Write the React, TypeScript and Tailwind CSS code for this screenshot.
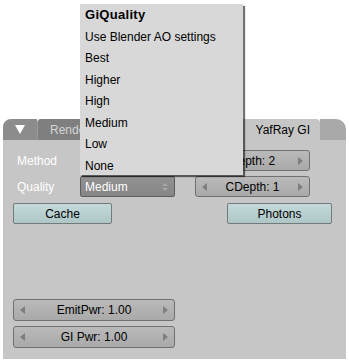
import React from "react";

const font = { fontFamily: '"Liberation Sans", Arial, sans-serif' };

function Arrow({ dir }: { dir: "l" | "r" }) {
  return (
    <svg width="5" height="8" viewBox="0 0 5 8" className="shrink-0">
      {dir === "l" ? <path d="M5 0 L0 4 L5 8 Z" fill="#7e7e7e" /> : <path d="M0 0 L5 4 L0 8 Z" fill="#7e7e7e" />}
    </svg>
  );
}

function Num({ label, className }: { label: string; className: string }) {
  return (
    <div
      className={`flex items-center justify-between px-[6px] rounded-[3px] border border-[#707070] bg-gradient-to-b from-[#bababa] to-[#a9a9a9] text-[12px] text-black ${className}`}
    >
      <Arrow dir="l" />
      <span className="leading-none">{label}</span>
      <Arrow dir="r" />
    </div>
  );
}

function Btn({ label, className }: { label: string; className: string }) {
  return (
    <div
      className={`flex items-center justify-center rounded-[2px] border border-[#727a7a] bg-gradient-to-b from-[#c4dada] to-[#aec6c6] text-[12px] text-black ${className}`}
    >
      <span className="leading-none">{label}</span>
    </div>
  );
}

function Drop({ label, className }: { label: string; className: string }) {
  return (
    <div
      className={`flex items-center justify-between pl-[4px] pr-[6px] rounded-[2px] border border-[#5e5e5e] bg-gradient-to-b from-[#929292] to-[#868686] text-[12px] text-white ${className}`}
    >
      <span className="leading-none">{label}</span>
      <svg width="6" height="10" viewBox="0 0 6 10">
        <path d="M0 4 L3 1 L6 4 Z M0 6 L3 9 L6 6 Z" fill="#a8a8a8" />
      </svg>
    </div>
  );
}

export default function App() {
  const items = ["Use Blender AO settings", "Best", "Higher", "High", "Medium", "Low", "None"];
  return (
    <div className="relative w-[349px] h-[363px] bg-white overflow-hidden" style={font}>
      {/* Panel */}
      <div className="ml-[3px] pt-[119px] w-[343px]">
        {/* header */}
        <div className="flex h-[21px]">
          <div className="w-[34px] rounded-tl-[8px] bg-[#8c8c8c] flex items-center justify-center">
            <svg width="10" height="9" viewBox="0 0 10 9">
              <path d="M0 0 L10 0 L5 9 Z" fill="#ffffff" />
            </svg>
          </div>
          <div className="w-[130px] bg-[#7f7f7f] border-l border-[#9a9a9a] rounded-tl-[4px] flex items-center pl-[12px] text-[12px] text-[#d4d4d4]">
            Render
          </div>
          <div className="flex-1 bg-[#c6c6c6] rounded-t-[4px] flex items-center justify-end pr-[10px] text-[12px] text-black">
            YafRay GI
          </div>
          <div className="w-[26px] bg-[#a9a9a9] rounded-tr-[10px]" />
        </div>
        {/* body */}
        <div className="h-[219px] bg-[#c6c6c6] flex justify-between pl-[10px] pr-[14px] pt-[10px]">
          <div className="flex flex-col w-[162px]">
            <div className="flex items-center h-[21px]">
              <span className="w-[67px] pl-[4px] text-[12px] text-white">Method</span>
              <Drop label="" className="w-[95px] h-[21px]" />
            </div>
            <div className="flex items-center h-[21px] mt-[5px]">
              <span className="w-[67px] pl-[4px] text-[12px] text-white">Quality</span>
              <Drop label="Medium" className="w-[95px] h-[21px]" />
            </div>
            <Btn label="Cache" className="w-[99px] h-[21px] mt-[6px]" />
            <Num label="EmitPwr: 1.00" className="w-[162px] h-[22px] mt-[75px]" />
            <Num label="GI Pwr: 1.00" className="w-[162px] h-[22px] mt-[5px]" />
          </div>
          <div className="flex flex-col items-end w-[137px]">
            <div className="w-[137px] flex flex-col items-start">
              <Num label="Depth: 2" className="w-[115px] h-[21px]" />
              <Num label="CDepth: 1" className="w-[115px] h-[21px] mt-[5px]" />
            </div>
            <Btn label="Photons" className="w-[105px] h-[21px] mt-[6px]" />
          </div>
        </div>
      </div>

      {/* Popup menu */}
      <div className="absolute left-[80px] top-[4px] w-[163px] h-[171px] bg-[#d8d8d8] shadow-[2px_2px_1px_rgba(0,0,0,0.55)] pl-[5px]">
        <div className="h-[22px] flex items-center text-[13px] font-bold text-black tracking-[0.3px]">GiQuality</div>
        {items.map((t) => (
          <div key={t} className="h-[21.5px] flex items-center text-[12px] text-black">
            {t}
          </div>
        ))}
      </div>
    </div>
  );
}
